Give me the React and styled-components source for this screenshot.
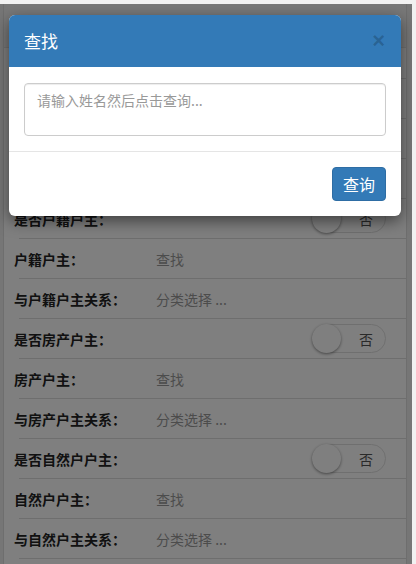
import React from "react";
import styled, { createGlobalStyle } from "styled-components";

const Global = createGlobalStyle`
  html, body { margin: 0; padding: 0; }
  body {
    background: #f1f1f1;
    font-family: "Liberation Sans", "Noto Sans CJK SC", sans-serif;
    width: 416px;
    height: 564px;
    overflow: hidden;
  }
`;

const Viewport = styled.div`
  position: relative;
  width: 412px;
  height: 560px;
  margin-top: 4px;
  overflow: hidden;
  display: flex;
  background: #ececec;
`;

const Page = styled.div`
  width: 402px;
  margin-left: 3px;
  border-left: 1px solid #dcdcdc;
  border-right: 1px solid #dcdcdc;
  background: #fff;
  display: flex;
  flex-direction: column;
`;

const TopBar = styled.div`
  height: 44px;
  background: #f0f0f0;
  border-bottom: 1px solid #e0e0e0;
  display: flex;
  align-items: center;
  justify-content: flex-end;
  padding-right: 4px;
  box-sizing: border-box;
`;

const Section = styled.div`
  height: 31px;
  display: flex;
  align-items: center;
  padding-left: 10px;
  font-size: 14px;
  color: #333;
  font-family: "Noto Sans CJK SC", sans-serif;
  position: relative;
  &::after {
    content: "";
    position: absolute;
    left: 15px;
    right: 0;
    bottom: 0;
    height: 1px;
    background: #ddd;
  }
`;

const Row = styled.div`
  position: relative;
  height: 40px;
  display: flex;
  align-items: center;
  padding: 0 20px 0 10px;
  font-family: "Noto Sans CJK SC", sans-serif;
  font-size: 14px;
  &::after {
    content: "";
    position: absolute;
    left: 15px;
    right: 0;
    bottom: 0;
    height: 1px;
    background: #ddd;
  }
`;

const Label = styled.div`
  width: 142px;
  font-weight: bold;
  color: #222;
  white-space: nowrap;
`;

const Value = styled.div`
  flex: 1;
  color: #999;
`;

const Switch = styled.div`
  margin-left: auto;
  width: 74px;
  height: 29px;
  box-sizing: border-box;
  border: 1px solid #dfdfdf;
  border-radius: 15px;
  background: #fff;
  display: flex;
  align-items: center;
  justify-content: space-between;
  margin-top: -1px;
`;

const Knob = styled.div`
  width: 29px;
  height: 29px;
  margin-left: -1px;
  border-radius: 50%;
  background: #fff;
  box-shadow: 0 1px 3px rgba(0, 0, 0, 0.45);
`;

const SwitchText = styled.span`
  font-size: 14px;
  color: #555;
  margin-right: 12px;
`;

const Overlay = styled.div`
  position: absolute;
  inset: 0;
  background: rgba(0, 0, 0, 0.5);
`;

const Modal = styled.div`
  position: absolute;
  left: 9px;
  top: 11px;
  width: 392px;
  background: #fff;
  border-radius: 6px;
  overflow: hidden;
  box-shadow: 0 5px 15px rgba(0, 0, 0, 0.5);
  font-family: "Noto Sans CJK SC", sans-serif;
`;

const ModalHeader = styled.div`
  height: 52px;
  background: #337ab7;
  display: flex;
  align-items: center;
  justify-content: space-between;
  padding: 0 15px;
`;

const Title = styled.h4`
  margin: 0;
  font-size: 17px;
  font-weight: normal;
  color: #fff;
  line-height: 1;
  margin-top: -2px;
`;

const Close = styled.span`
  font-family: "Liberation Sans", sans-serif;
  font-size: 22px;
  font-weight: bold;
  color: rgba(0, 0, 0, 0.2);
  line-height: 1;
  margin-right: 1px;
`;

const ModalBody = styled.div`
  padding: 16px 15px 15px;
`;

const TextArea = styled.textarea`
  display: block;
  width: 100%;
  height: 53px;
  box-sizing: border-box;
  border: 1px solid #ccc;
  border-radius: 4px;
  padding: 6px 12px;
  resize: none;
  font-family: "Noto Sans CJK SC", sans-serif;
  font-size: 14px;
  line-height: 20px;
  box-shadow: inset 0 1px 1px rgba(0, 0, 0, 0.075);
  &::placeholder { color: #999; }
`;

const ModalFooter = styled.div`
  border-top: 1px solid #e5e5e5;
  padding: 15px;
  display: flex;
  justify-content: flex-end;
`;

const Button = styled.button`
  height: 34px;
  padding: 0 10px;
  border: 1px solid #2e6da4;
  border-radius: 4px;
  background: #337ab7;
  color: #fff;
  font-family: "Noto Sans CJK SC", sans-serif;
  font-size: 16px;
  line-height: 1;
`;

const rows = [
  { label: "姓名：", value: "" },
  { label: "性别：", value: "" },
  { label: "身份证号：", value: "" },
  { label: "是否户籍户主：", toggle: true },
  { label: "户籍户主：", value: "查找" },
  { label: "与户籍户主关系：", value: "分类选择 ..." },
  { label: "是否房产户主：", toggle: true },
  { label: "房产户主：", value: "查找" },
  { label: "与房产户主关系：", value: "分类选择 ..." },
  { label: "是否自然户户主：", toggle: true },
  { label: "自然户户主：", value: "查找" },
  { label: "与自然户主关系：", value: "分类选择 ..." },
];

export default function App() {
  return (
    <>
      <Global />
      <Viewport>
        <Page>
          <TopBar>
            <svg width="14" height="12" viewBox="0 0 14 12">
              <path d="M1 2h12M1 6h12M1 10h12" stroke="#2a5d9c" strokeWidth="1.5" />
            </svg>
          </TopBar>
          <Section>基本信息</Section>
          {rows.map((r, i) => (
            <Row key={i}>
              <Label>{r.label}</Label>
              {r.toggle ? (
                <Switch>
                  <Knob />
                  <SwitchText>否</SwitchText>
                </Switch>
              ) : (
                <Value>{r.value}</Value>
              )}
            </Row>
          ))}
        </Page>
        <Overlay />
        <Modal>
          <ModalHeader>
            <Title>查找</Title>
            <Close>×</Close>
          </ModalHeader>
          <ModalBody>
            <TextArea placeholder="请输入姓名然后点击查询..." />
          </ModalBody>
          <ModalFooter>
            <Button>查询</Button>
          </ModalFooter>
        </Modal>
      </Viewport>
    </>
  );
}
